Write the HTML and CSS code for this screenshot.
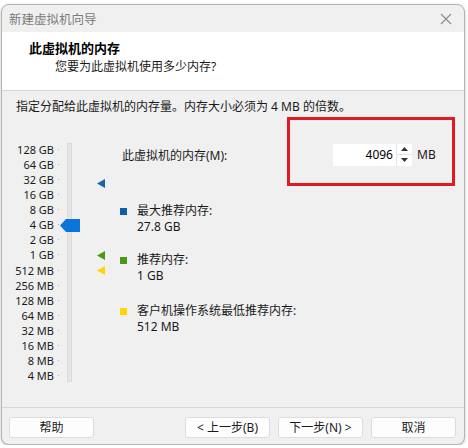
FILE: index.html
```html
<!DOCTYPE html>
<html lang="zh-CN">
<head>
<meta charset="utf-8">
<title>新建虚拟机向导</title>
<link rel="stylesheet" href="styles.css">
</head>
<body>
<div class="window">
  <div class="titlebar">
    <span class="title">新建虚拟机向导</span>
    <svg class="close" width="12" height="12" viewBox="0 0 12 12"><path d="M1 1 L11 11 M11 1 L1 11" stroke="#8a8a8a" stroke-width="1.1" fill="none"/></svg>
  </div>
  <div class="header">
    <div class="h-title">此虚拟机的内存</div>
    <div class="h-sub">您要为此虚拟机使用多少内存?</div>
  </div>
  <div class="body">
    <div class="intro">指定分配给此虚拟机的内存量。内存大小必须为 4 MB 的倍数。</div>
    <div class="main">
      <div class="scale">
        <div class="labels">
          <div class="label">128 GB</div>
          <div class="label">64 GB</div>
          <div class="label">32 GB</div>
          <div class="label">16 GB</div>
          <div class="label">8 GB</div>
          <div class="label">4 GB</div>
          <div class="label">2 GB</div>
          <div class="label">1 GB</div>
          <div class="label">512 MB</div>
          <div class="label">256 MB</div>
          <div class="label">128 MB</div>
          <div class="label">64 MB</div>
          <div class="label">32 MB</div>
          <div class="label">16 MB</div>
          <div class="label">8 MB</div>
          <div class="label">4 MB</div>
        </div>
        <div class="track"></div>
        <svg class="thumb" width="20" height="13" viewBox="0 0 20 13"><path d="M0 6.5 L6 0 H20 V13 H6 Z" fill="#0a74d8"/></svg>
        <svg class="marker m-max" width="8" height="9" viewBox="0 0 8 9"><path d="M0 4.5 L8 0 V9 Z" fill="#1a63b0"/></svg>
        <svg class="marker m-rec" width="8" height="9" viewBox="0 0 8 9"><path d="M0 4.5 L8 0 V9 Z" fill="#4b9a14"/></svg>
        <svg class="marker m-min" width="8" height="9" viewBox="0 0 8 9"><path d="M0 4.5 L8 0 V9 Z" fill="#ffd400"/></svg>
      </div>
      <div class="info">
        <div class="mem-row">
          <span class="mem-label">此虚拟机的内存(M):</span>
          <div class="spinner">
            <div class="spin-input">4096</div>
            <div class="spin-btns">
              <div class="spin-btn"><svg width="7" height="4" viewBox="0 0 7 4"><path d="M0 4 L3.5 0 L7 4 Z" fill="#333"/></svg></div>
              <div class="spin-btn"><svg width="7" height="4" viewBox="0 0 7 4"><path d="M0 0 L7 0 L3.5 4 Z" fill="#333"/></svg></div>
            </div>
            <span class="unit">MB</span>
          </div>
          <div class="highlight"></div>
        </div>
        <div class="legend">
          <div class="item item-max">
            <div class="item-head"><span class="sq sq-blue"></span>最大推荐内存:</div>
            <div class="item-val">27.8 GB</div>
          </div>
          <div class="item item-rec">
            <div class="item-head"><span class="sq sq-green"></span>推荐内存:</div>
            <div class="item-val">1 GB</div>
          </div>
          <div class="item item-min">
            <div class="item-head"><span class="sq sq-yellow"></span>客户机操作系统最低推荐内存:</div>
            <div class="item-val">512 MB</div>
          </div>
        </div>
      </div>
    </div>
  </div>
  <div class="footer">
    <button class="btn btn-help">帮助</button>
    <div class="spacer"></div>
    <button class="btn">&lt; 上一步(B)</button>
    <button class="btn">下一步(N) &gt;</button>
    <button class="btn">取消</button>
  </div>
</div>
</body>
</html>
```
FILE: styles.css
```css
* { box-sizing: border-box; }
html, body { margin: 0; padding: 0; background: #ffffff; }
body {
  font-family: "Noto Sans", "Noto Sans CJK SC", sans-serif;
  font-size: 12px;
  color: #1a1a1a;
}
.window {
  margin: 4px 0 0 1px;
  width: 464px;
  height: 441px;
  border: 1px solid #b4b4b4;
  border-radius: 8px;
  overflow: hidden;
  background: #f0f0f0;
  display: flex;
  flex-direction: column;
  box-shadow: 0 1px 3px rgba(0,0,0,0.25);
}
.titlebar {
  height: 27px;
  flex: none;
  display: flex;
  align-items: center;
  justify-content: space-between;
  padding: 0 12px 0 7px;
  color: #7b7b7b;
  font-size: 12.5px;
}
.close { margin-top: 1px; }
.header {
  height: 59px;
  flex: none;
  background: #ffffff;
  border-bottom: 1px solid #d6d6d6;
  padding: 7px 0 0 27px;
}
.h-title {
  font-weight: bold;
  font-size: 13px;
  line-height: 18px;
  color: #000;
}
.h-sub {
  margin: 2px 0 0 26px;
  line-height: 16px;
}
.body {
  flex: 1;
  border-bottom: 1px solid #d6d6d6;
}
.intro {
  margin: 8px 0 0 14px;
  line-height: 16px;
}
.main {
  display: flex;
  margin-top: 27px;
}
.scale {
  position: relative;
  width: 118px;
  display: flex;
  flex: none;
}
.labels {
  width: 52px;
  display: flex;
  flex-direction: column;
}
.label {
  height: 15.07px;
  line-height: 15.07px;
  font-size: 11px;
  text-align: right;
  position: relative;
  white-space: nowrap;
}
.label::after {
  content: "";
  position: absolute;
  right: -5px;
  top: 7px;
  width: 1px;
  height: 1px;
  background: #b0b0b0;
}
.track {
  margin: 1px 0 0 13px;
  width: 5px;
  height: 239px;
  border: 1px solid #dadada;
  background: #e6e6e6;
}
.thumb {
  position: absolute;
  left: 58px;
  top: 77px;
}
.marker { position: absolute; left: 95px; }
.m-max { top: 37px; }
.m-rec { top: 109px; }
.m-min { top: 124px; }
.info {
  flex: 1;
  padding-left: 0;
}
.mem-row {
  position: relative;
  display: flex;
  align-items: center;
  height: 23px;
  margin-top: 1px;
}
.mem-label {
  margin-left: 2px;
  width: 211px;
}
.spinner {
  display: flex;
  align-items: center;
}
.spin-input {
  width: 63px;
  height: 22px;
  background: #fff;
  text-align: right;
  line-height: 22px;
  padding-right: 3px;
  color: #000;
}
.spin-btns {
  width: 16px;
  height: 22px;
  background: #fff;
  display: flex;
  flex-direction: column;
  border-left: 1px solid #e4e4e4;
}
.spin-btn {
  flex: 1;
  display: flex;
  align-items: center;
  justify-content: center;
}
.spin-btn + .spin-btn { border-top: 1px solid #e4e4e4; }
.unit { margin-left: 5px; }
.highlight {
  position: absolute;
  left: 167px;
  top: -26px;
  width: 168px;
  height: 69px;
  border: 3px solid #e2191f;
  pointer-events: none;
}
.legend {
  margin-top: 37px;
}
.item-head {
  display: flex;
  align-items: center;
  line-height: 16px;
}
.sq {
  width: 7px;
  height: 7px;
  margin-right: 10px;
  flex: none;
}
.sq-blue { background: #0e5fa8; }
.sq-green { background: #4b9a14; }
.sq-yellow { background: #ffd700; }
.item-val {
  margin-left: 17px;
  line-height: 16px;
}
.item-rec { margin-top: 17px; }
.item-min { margin-top: 19px; }
.footer {
  height: 36px;
  flex: none;
  display: flex;
  align-items: flex-start;
  padding: 9px 8px 0 7px;
  gap: 8px;
}
.spacer { flex: 1; }
.btn {
  width: 85px;
  height: 21px;
  background: #fdfdfd;
  border: 1px solid #dcdcdc;
  border-radius: 3px;
  font-family: "Noto Sans", "Noto Sans CJK SC", sans-serif;
  font-size: 12px;
  color: #1a1a1a;
  padding: 0;
  line-height: 19px;
}
.btn-help { width: 85px; }
```
